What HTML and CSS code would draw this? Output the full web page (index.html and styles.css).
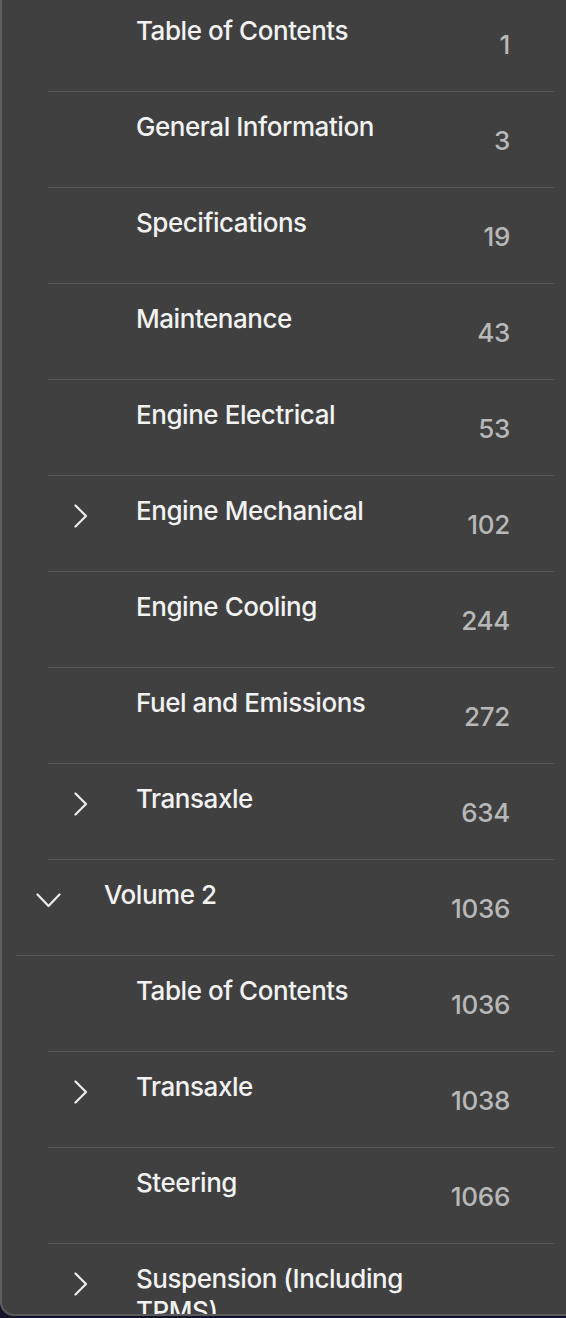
FILE: index.html
```html
<!DOCTYPE html>
<html lang="en">
<head>
<meta charset="utf-8">
<title>Outline</title>
<link rel="stylesheet" href="styles.css">
</head>
<body>
<div class="panel">
  <ul class="outline">
    <li class="row lvl1"><span class="slot"></span><span class="title">Table of Contents</span><span class="num">1</span></li>
    <li class="row lvl1"><span class="slot"></span><span class="title">General Information</span><span class="num">3</span></li>
    <li class="row lvl1"><span class="slot"></span><span class="title">Specifications</span><span class="num">19</span></li>
    <li class="row lvl1"><span class="slot"></span><span class="title">Maintenance</span><span class="num">43</span></li>
    <li class="row lvl1"><span class="slot"></span><span class="title">Engine Electrical</span><span class="num">53</span></li>
    <li class="row lvl1"><span class="slot"><svg class="chev-r" width="14" height="24" viewBox="0 0 14 24"><polyline points="1.5,1.5 12,12 1.5,22.5"/></svg></span><span class="title">Engine Mechanical</span><span class="num">102</span></li>
    <li class="row lvl1"><span class="slot"></span><span class="title">Engine Cooling</span><span class="num">244</span></li>
    <li class="row lvl1"><span class="slot"></span><span class="title">Fuel and Emissions</span><span class="num">272</span></li>
    <li class="row lvl1"><span class="slot"><svg class="chev-r" width="14" height="24" viewBox="0 0 14 24"><polyline points="1.5,1.5 12,12 1.5,22.5"/></svg></span><span class="title">Transaxle</span><span class="num">634</span></li>
    <li class="row lvl0"><span class="slot"><svg class="chev-d" width="25" height="15" viewBox="0 0 25 15"><polyline points="1.5,1.5 12.5,13 23.5,1.5"/></svg></span><span class="title">Volume 2</span><span class="num">1036</span></li>
    <li class="row lvl1"><span class="slot"></span><span class="title">Table of Contents</span><span class="num">1036</span></li>
    <li class="row lvl1"><span class="slot"><svg class="chev-r" width="14" height="24" viewBox="0 0 14 24"><polyline points="1.5,1.5 12,12 1.5,22.5"/></svg></span><span class="title">Transaxle</span><span class="num">1038</span></li>
    <li class="row lvl1"><span class="slot"></span><span class="title">Steering</span><span class="num">1066</span></li>
    <li class="row lvl1"><span class="slot"><svg class="chev-r" width="14" height="24" viewBox="0 0 14 24"><polyline points="1.5,1.5 12,12 1.5,22.5"/></svg></span><span class="title">Suspension (Including TPMS)</span><span class="num">1092</span></li>
  </ul>
</div>
</body>
</html>
```

FILE: styles.css
```css
html, body {
  margin: 0;
  padding: 0;
}
body {
  background: #13132a;
  width: 566px;
  height: 1318px;
  overflow: hidden;
  font-family: Inter, "Liberation Sans", sans-serif;
}
.panel {
  box-sizing: border-box;
  height: 1316px;
  background: #404040;
  border-left: 2px solid #5e5e5e;
  border-bottom: 2px solid #5a5a5a;
  border-bottom-left-radius: 14px;
  overflow: hidden;
}
.outline {
  list-style: none;
  margin: -4px 0 0 0;
  padding: 0;
}
.row {
  display: flex;
  align-items: flex-start;
  margin-right: 12px;
  border-bottom: 1px solid #575757;
  min-height: 95px;
}
.lvl0 { margin-left: 14px; }
.lvl1 { margin-left: 46px; }
.slot {
  flex: 0 0 65px;
  height: 79px;
  display: flex;
  align-items: center;
  justify-content: center;
}
.slot svg polyline {
  fill: none;
  stroke: #ececec;
  stroke-width: 2.2;
  stroke-linecap: round;
  stroke-linejoin: round;
}
.lvl0 .slot { height: 81px; }
.title {
  flex: 1 1 auto;
  padding: 19px 0 44px 23px;
  font-size: 26px;
  line-height: 32px;
  font-weight: 500;
  color: #f2f2f2;
  letter-spacing: -0.45px;
}
.num {
  flex: 0 0 auto;
  align-self: flex-end;
  width: 90px;
  text-align: right;
  padding: 0 44px 30px 0;
  font-size: 26px;
  line-height: 32px;
  font-weight: 500;
  color: #b8b8b8;
  letter-spacing: -0.3px;
}
```
